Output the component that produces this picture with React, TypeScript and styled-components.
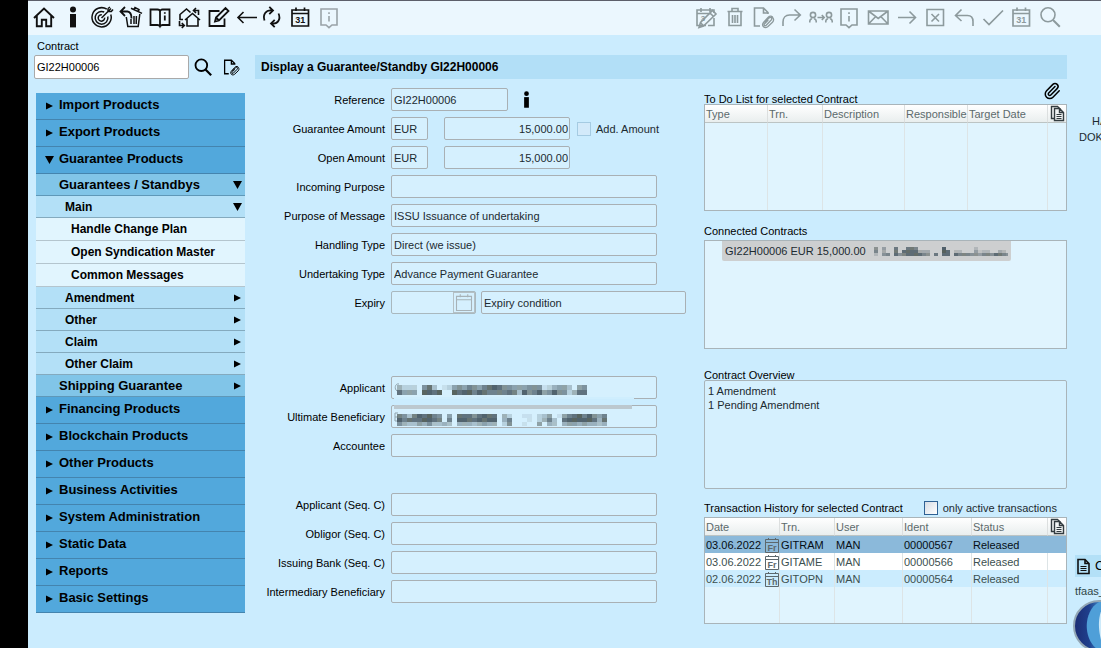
import React from "react";
import styled, { createGlobalStyle, css } from "styled-components";
import { Paperclip } from "lucide-react";

const GlobalStyle = createGlobalStyle`
  * { box-sizing: border-box; }
  body {
    margin: 0;
    background: #cbecfe;
    font-family: "Liberation Sans", Arial, sans-serif;
    font-size: 11px;
    line-height: 14px;
    color: #000;
  }
  button, input, textarea { font: inherit; color: inherit; margin: 0; }
  button { border: 0; padding: 0; background: none; cursor: pointer; }
`;

/* ---------- page frame ---------- */

const Page = styled.div`
  min-height: 100vh;
  display: flex;
  flex-direction: column;
  border-left: 28px solid #000;
  overflow: hidden;
`;

const Toolbar = styled.header`
  display: flex;
  justify-content: space-between;
  align-items: center;
  height: 35px;
  padding: 0 39px 2px 4px;
  border-top: 1px solid #5c5f6a;
  background: #ebf7fe;
`;

const IconGroup = styled.div<{ $muted?: boolean }>`
  display: flex;
  justify-content: space-between;
  gap: ${(p) => (p.$muted ? "0" : "5px")};
  width: ${(p) => (p.$muted ? "368px" : "auto")};
  color: ${(p) => (p.$muted ? "#8d9a9d" : "#111")};
`;

const IconButton = styled.button<{ $width?: number; $faded?: boolean }>`
  display: flex;
  justify-content: center;
  align-items: center;
  width: ${(p) => p.$width ?? 24}px;
  height: 24px;
  color: ${(p) => (p.$faded ? "#9aa3a8" : "inherit")};
`;

const Body = styled.div`
  flex: 1;
  display: grid;
  grid-template-columns: 211px minmax(0, 1fr) 28px;
  padding-left: 6px;
`;

/* ---------- sidebar ---------- */

const Sidebar = styled.aside`
  padding-top: 3px;
`;

const SearchLabel = styled.label`
  display: block;
  padding: 0 0 1px 3px;
  line-height: 16px;
`;

const SearchRow = styled.div`
  display: flex;
  align-items: center;
  height: 24px;
`;

const ContractInput = styled.input`
  width: 155px;
  height: 24px;
  padding: 0 2px;
  border: 1px solid #a9a9a9;
  border-radius: 2px;
  background: #fff;
`;

const SideIcon = styled(IconButton)`
  flex: 1;
`;

const Menu = styled.nav`
  margin: 14px 0 0 2px;
`;

const level0 = css`
  height: 27px;
  padding-left: 9px;
  font-size: 13px;
  background: #52a8dc;
  border-bottom: 1px solid #4484ae;
  & > span {
    padding-bottom: 2px;
  }
`;
const level1 = css`
  height: 22px;
  padding-left: 23px;
  font-size: 13px;
  background: #81c5e8;
  border-bottom: 1px solid #5f98b8;
`;
const level2 = css`
  height: 22px;
  padding-left: 29px;
  font-size: 12px;
  background: #b3e0f7;
  border-bottom: 1px solid #84aabe;
`;
const level3 = css`
  height: 23px;
  padding-left: 35px;
  font-size: 12px;
  background: #e1f5fe;
  border-bottom: 1px solid #b4c5ce;
`;
const levels = [level0, level1, level2, level3];

const MenuItem = styled.button<{ $level: number }>`
  display: flex;
  align-items: center;
  width: 100%;
  padding-right: 2px;
  font-weight: bold;
  text-align: left;
  ${(p) => levels[p.$level]}
`;

const MenuText = styled.span`
  flex: 1;
`;

const Caret = styled.svg<{ $lead?: boolean }>`
  width: 10px;
  height: 10px;
  margin-right: ${(p) => (p.$lead ? "4px" : "0")};
`;

/* ---------- main ---------- */

const Main = styled.main`
  padding: 20px 6px 0 10px;
`;

const Title = styled.h1`
  margin: 0;
  padding-left: 6px;
  font-size: 12px;
  line-height: 24px;
  background: #b2dff7;
`;

const Columns = styled.div`
  display: grid;
  grid-template-columns: 431px minmax(0, 1fr);
  column-gap: 18px;
`;

const Form = styled.form`
  padding-top: 9px;
`;

const FormGroup = styled.div`
  display: flex;
  flex-direction: column;
  gap: 6px;
  margin-bottom: 62px;
  & + & {
    margin-bottom: 36px;
  }
`;

const FormRow = styled.div`
  display: grid;
  grid-template-columns: 130px minmax(0, 1fr);
  column-gap: 6px;
  align-items: center;
  height: 23px;
`;

const RowLabel = styled.label`
  text-align: right;
  white-space: nowrap;
`;

const Controls = styled.div`
  display: flex;
  align-items: center;
`;

const Field = styled.input<{ $width?: number; $right?: boolean; $gap?: number }>`
  width: ${(p) => p.$width ?? 266}px;
  height: 23px;
  margin-left: ${(p) => p.$gap ?? 0}px;
  padding: 0 ${(p) => (p.$right ? 1 : 2)}px 0 2px;
  text-align: ${(p) => (p.$right ? "right" : "left")};
  color: #1c2a30;
  border: 1px solid #a9b0b4;
  border-radius: 2px;
  background: #d5f0fe;
`;

const InfoButton = styled(IconButton)`
  width: 16px;
  height: 22px;
  margin-left: 10px;
`;

const DateBox = styled.div`
  display: flex;
  align-items: center;
  width: 85px;
  border: 1px solid #a9b8be;
  border-radius: 2px;
  background: #d5f0fe;
`;

const DateInput = styled.input`
  width: 61px;
  height: 21px;
  border: 0;
  background: none;
`;

const DateButton = styled.button`
  display: flex;
  width: 22px;
  height: 21px;
  justify-content: center;
  align-items: center;
  border: 1px solid #b4c0c5;
  color: #a7b2b7;
`;

const CheckLabel = styled.label<{ $gap: number }>`
  display: flex;
  align-items: center;
  gap: 5px;
  margin-left: ${(p) => p.$gap}px;
  color: #1c2a30;
`;

const CheckBox = styled.input<{ $pale?: boolean }>`
  appearance: none;
  width: 14px;
  height: 14px;
  border: 1px solid ${(p) => (p.$pale ? "#a5cbe2" : "#2f6194")};
  background: ${(p) =>
    p.$pale ? "#d3eafa" : "linear-gradient(135deg, #d6dce4, #ffffff)"};
`;

const Masked = styled.div`
  display: grid;
  & > * {
    grid-area: 1 / 1;
  }
  svg {
    pointer-events: none;
  }
`;

/* ---------- right hand panels ---------- */

const Panel = styled.section``;

const PanelHead = styled.div<{ $height: number; $lift?: boolean }>`
  display: flex;
  justify-content: space-between;
  align-items: flex-end;
  height: ${(p) => p.$height}px;
  padding: ${(p) => (p.$lift ? "0 10px 2px 0" : "0 6px 0 0")};
  line-height: ${(p) => (p.$lift ? 14 : 10)}px;
`;

const PanelTitle = styled.h2`
  margin: 0;
  font-size: 11px;
  font-weight: normal;
  line-height: inherit;
  white-space: nowrap;
`;

const ClipButton = styled(IconButton)`
  width: 18px;
  margin-bottom: 1px;
`;

const ListBox = styled.ul`
  height: 109px;
  margin: 0;
  padding: 0 0 0 17px;
  list-style: none;
  border: 1px solid #a9b4b9;
  background: #e0f4fe;
`;

const ListEntry = styled.li`
  display: flex;
  align-items: center;
  width: 289px;
  height: 20px;
  padding-left: 3px;
  border-radius: 0 0 2px 2px;
  color: #1c2a30;
  background: #cdcfd0;
`;

const Overview = styled.textarea`
  display: block;
  width: 100%;
  height: 109px;
  padding: 3px;
  resize: none;
  color: #1c2a30;
  border: 1px solid #a9b4b9;
  border-radius: 2px;
  background: #d5f0fe;
  outline: none;
`;

const TableFrame = styled.div`
  height: 107px;
  overflow: hidden;
  border: 1px solid #a9b4b9;
  background: #e0f4fe;
`;

const Table = styled.table`
  width: 100%;
  table-layout: fixed;
  border-collapse: separate;
  border-spacing: 0;
`;

const HeadCell = styled.th`
  height: 18px;
  padding: 0 0 0 1px;
  overflow: hidden;
  text-align: left;
  font-weight: normal;
  line-height: 14px;
  white-space: nowrap;
  color: #5c6a6c;
  border-right: 1px solid #dcdfdf;
  border-bottom: 1px solid #bcc4c4;
  background: linear-gradient(#ffffff, #e9eeee);
  &:last-child {
    border-right: 0;
    padding-left: 2px;
  }
`;

const rowTone = {
  selected: css`
    height: 17px;
    color: #050d14;
    background: #8bb9da;
    border-right-color: #8bb9da;
  `,
  white: css`
    height: 17px;
    color: #3c4f4f;
    background: #fff;
  `,
  blue: css`
    height: 17px;
    color: #3c4f4f;
    background: #cbecfe;
  `,
  empty: css`
    height: 18px;
    background: #e0f4fe;
  `,
};

const Cell = styled.td<{ $tone: keyof typeof rowTone }>`
  padding: 0 0 0 1px;
  white-space: nowrap;
  line-height: 14px;
  border-right: 1px solid #dde4e6;
  ${(p) => rowTone[p.$tone]}
  &:last-child {
    border-right: 0;
  }
`;

const DateCell = styled.span`
  display: flex;
  align-items: center;
  justify-content: space-between;
`;

const CopyButton = styled.button`
  display: flex;
  width: 16px;
  height: 17px;
  color: #333c40;
`;

/* ---------- far right strip ---------- */

const Dock = styled.aside`
  display: flex;
  flex-direction: column;
  padding-top: 78px;
  overflow: hidden;
  white-space: nowrap;
`;

const Owner = styled.div`
  padding-left: 6px;
  line-height: 16px;
  color: #1c2a30;
`;

const OwnerName = styled.div`
  padding-left: 13px;
`;

const DockButton = styled.button`
  display: flex;
  align-items: center;
  gap: 4px;
  height: 22px;
  margin: auto 0 0 2px;
  padding-left: 1px;
  font-size: 13px;
  background: #b3e0f7;
`;

const Session = styled.div`
  padding: 6px 0 0 2px;
  line-height: 16px;
  color: #2f4646;
`;

const Logo = styled.svg`
  width: 52px;
  height: 49px;
`;

/* ---------- icons ---------- */

function Svg({ children, size = 24, w = 2 }: { children: React.ReactNode; size?: number; w?: number }) {
  return (
    <svg width={size} height={size} viewBox="0 0 24 24" fill="none" stroke="currentColor" strokeWidth={w} aria-hidden="true" style={{ flex: "none" }}>
      {children}
    </svg>
  );
}

const Home = () => (
  <Svg w={1.9}><path d="M2 13 12 3.5 22 13M4.8 11v10.2h5v-6.4h4.4v6.4h5V11" /></Svg>
);
const InfoMark = ({ size = 24 }: { size?: number }) => (
  <Svg size={size}>
    <circle cx="12" cy="4.6" r="3" fill="currentColor" stroke="none" />
    <path d="M9 9h6v13.4H9z" fill="currentColor" stroke="none" />
  </Svg>
);
const Target = () => (
  <Svg w={1.5}>
    <path d="M16.8 4.2A9.6 9.6 0 1 0 20.8 9.500M14.2 7A6.400 6.400 0 1 0 17.800 11.500M11.800 9.800A3.200 3.200 0 1 0 14.600 12.600" />
    <path d="m11.500 13 9.500-9.500M18 3.500v3h3.300l1.700-2M18 3.500 20 2" />
  </Svg>
);
const Restore = () => (
  <Svg w={1.8}>
    <path d="M1.5 6.5h7c3 .3 4 3 4 7M6 2 1.5 6.5 6 11" />
    <path d="m12 3.2 11 5.2M15 4.6l1-2 4 2-.8 2M7.3 12l1.5 9.6h10.4L20.8 9M12 14v5M15 11v8M17.4 11l-.2 8" strokeWidth="1.5" />
  </Svg>
);
const Book = () => (
  <Svg w={1.8}>
    <path d="M2.500 4.500h7c1.500 0 2.500 1 2.500 2 0-1 1-2 2.500-2h7V20h-7c-1.300 0-2 .4-2.500 1.400-.5-1-1.200-1.400-2.500-1.400h-7zM12 6.500v14.500" />
    <path d="M16.800 10.500v5M16.800 7.300v1.500" />
  </Svg>
);
const HouseSwap = () => (
  <Svg w={1.600}>
    <path d="M3 13V9.500L9.500 4l4 3.500M3 11.500v3h3M8 15l7.500-6.500L23 15M10 13.500V21h11v-7.500M17 5.500h4.500V10M19 3l-2.500 2.500L19 8M2.500 16v4.500H7M4.800 18l2.500 2.500L4.800 23" />
  </Svg>
);
const Edit = () => (
  <Svg w={1.8}>
    <path d="M13.500 6H3.500v15h15v-7.500M9 16.500l1-4L19.500 3l3 3L13 15.500zM10 12.500l3 3" />
  </Svg>
);
const Back = () => (
  <Svg w={1.600}><path d="M22 12.500H3M8.500 7 3 12.500l5.500 5.500" /></Svg>
);
const Refresh = () => (
  <Svg w={1.800}>
    <path d="M2.500 15.500C.5 9.500 4 5 9.500 5.500h1M7.300 1.800 11 5.500 7.300 9.200M16.500 8.500c2.500 5.500-.5 10.500-6 10h-1M12.700 14.800 9 18.500l3.700 3.700" />
  </Svg>
);
const Calendar = ({ day = "31" }: { day?: string }) => (
  <Svg w={1.700}>
    <path d="M4 5h16.500v16H4zM4 8.500h16.500M8 2.500V6M16.500 2.500V6" />
    <text x="12.200" y="18" fontSize="9" fontWeight="bold" textAnchor="middle" fill="currentColor" stroke="none">{day}</text>
  </Svg>
);
const InfoBubble = () => (
  <Svg w={1.600}>
    <path d="M4 4h16v16h-5l-3 2.600L9 20H4zM12 11v5.500M12 7.200v1.800" />
  </Svg>
);
const CalendarEdit = () => (
  <Svg w={1.600}>
    <path d="M12 20.500H3V5h17v3M3 8.500h14M7 3v4M16 3v4M20 13v7.500h-6" />
    <path d="m5 22.500 1.500-5L18.500 5.500l3.500 3.500L9.500 21zM6.500 17.500l3 3.500M16 8l3.500 3.500" />
    <text x="9" y="16" fontSize="8" fontWeight="bold" textAnchor="middle" fill="currentColor" stroke="none">3</text>
  </Svg>
);
const Bin = () => (
  <Svg w={1.600}>
    <path d="M4.500 6.500h15M9 6V3.500h6V6M6 7v13.500h12V7M9.500 10v8M12 10v8M14.500 10v8" />
  </Svg>
);
const FileClip = ({ size = 24, w = 1.600 }: { size?: number; w?: number }) => (
  <Svg size={size} w={w}>
    <path d="M17 9V7.500L12.500 3H3.500v18H9M12.500 3v5H17" />
    <path d="m13.500 17.500 4.500-4.500c1.800-1.600 3.600.3 2.200 2l-5 5.200c-1.400 1.300-2.800 0-1.600-1.500l3.700-3.700M22 13c1 1.500.8 2.800-.5 4.200L17 21.500c-3.500 3-7-.8-4.500-4l4.500-5c2-2 4.500-1.500 5 .5" strokeWidth="1.300" />
  </Svg>
);
const Forward = () => (
  <Svg w={1.600}><path d="M3 21v-4c0-4 2.500-7 6.500-7H20M14.500 4.500 20.300 10l-5.800 5.500" /></Svg>
);
const Handover = () => (
  <Svg w={1.600}>
    <circle cx="4" cy="10" r="2.600" /><circle cx="20" cy="10" r="2.600" />
    <path d="M.8 17.500v-1.500c0-1 .7-1.700 2-2.500M7.200 17.500v-1.500c0-1-.7-1.700-2-2.500M16.800 17.500v-1.500c0-1 .7-1.700 2-2.500M23.200 17.500v-1.500c0-1-.7-1.700-2-2.500M8.500 12.500h6.500M12.800 10l2.400 2.500-2.400 2.500" />
  </Svg>
);
const Mail = () => (
  <Svg w={1.600}><path d="M2.500 6h19.500v13H2.500zM2.500 6l9.700 7.500L22 6M2.500 19l7-7.300M22 19l-7-7.300" /></Svg>
);
const Next = () => (
  <Svg w={1.600}><path d="M3 12.500h17M14.500 6.500l6 6-6 6" /></Svg>
);
const Cancel = () => (
  <Svg w={1.600}><path d="M4 4.500h16.500v16H4zM8.500 9l7.500 7.500M16 9l-7.500 7.500" /></Svg>
);
const Undo = () => (
  <Svg w={1.600}><path d="M21 21v-4.500c0-4-2-6-5.500-6H3.500M9.500 4.500 3.500 10.500l6 5.500" /></Svg>
);
const Tick = () => (
  <Svg w={1.700}><path d="m2.500 14 5.500 5.500L22 5.500" /></Svg>
);
const Magnifier = ({ size = 24, w = 1.600 }: { size?: number; w?: number }) => (
  <Svg size={size} w={w}><circle cx="10" cy="9.800" r="7" /><path d="m15 15 6.800 6.800" strokeWidth={w + 0.400} /></Svg>
);
const CopyPages = () => (
  <svg width="16" height="17" viewBox="0 0 16 17" fill="none" stroke="currentColor" aria-hidden="true">
    <path d="M4.500 13.500h-3v-12h6l3 3" strokeWidth="1.400" />
    <path d="M4.500 3.500h5l4 4v8h-9zM9.500 3.500v4h4" strokeWidth="1.400" fill="#f2f5f5" />
    <path d="M6.500 9.500h5M6.500 11.500h5M6.500 13.500h5" />
  </svg>
);
const DocIcon = () => (
  <svg width="15" height="17" viewBox="0 0 15 17" fill="none" stroke="#111" aria-hidden="true" style={{ flex: "none" }}>
    <path d="M2 1.500h7l4 4v10H2zM9 1.500v4h4" strokeWidth="1.600" />
    <path d="M4.500 8.500h6M4.500 10.500h6M4.500 12.500h6" strokeWidth="1" />
  </svg>
);
const BlankCalendar = () => (
  <Svg size={20} w={1.300}><path d="M3 4h18v17H3zM3 8h18M7.500 1.500V5M16.500 1.500V5" /></Svg>
);
const DayIcon = ({ day }: { day: string }) => (
  <svg width="15" height="16" viewBox="0 0 15 16" fill="none" stroke="#5d686d" aria-hidden="true" style={{ flex: "none" }}>
    <path d="M1.500 2.500h13v13h-13zM1.500 5.500h13M4.500 1v2M11.500 1v2" />
    <text x="8" y="14" fontSize="9" fontWeight="bold" textAnchor="middle" fill="#5d686d" stroke="none">{day}</text>
  </svg>
);

/* Pixelated strip hiding confidential names: one digit per cell, 0 clear to 9 dark. */
function mosaic(rows: string[], x: number, y: number, cw: number, ch: number) {
  return rows.flatMap((row, r) =>
    [...row].map((d, c) =>
      d === "0" ? null : (
        <rect key={`${r}-${c}`} x={x + c * cw} y={y + r * ch} width={cw} height={ch} fill={(c * 7 + r) % 3 ? "#42535e" : "#4a544f"} opacity={Number(d) / 10} />
      )
    )
  );
}

/* ---------- data ---------- */

type Entry = { text: string; level: number; open?: boolean };

const menu: Entry[] = [
  { text: "Import Products", level: 0 },
  { text: "Export Products", level: 0 },
  { text: "Guarantee Products", level: 0, open: true },
  { text: "Guarantees / Standbys", level: 1, open: true },
  { text: "Main", level: 2, open: true },
  { text: "Handle Change Plan", level: 3 },
  { text: "Open Syndication Master", level: 3 },
  { text: "Common Messages", level: 3 },
  { text: "Amendment", level: 2 },
  { text: "Other", level: 2 },
  { text: "Claim", level: 2 },
  { text: "Other Claim", level: 2 },
  { text: "Shipping Guarantee", level: 1 },
  { text: "Financing Products", level: 0 },
  { text: "Blockchain Products", level: 0 },
  { text: "Other Products", level: 0 },
  { text: "Business Activities", level: 0 },
  { text: "System Administration", level: 0 },
  { text: "Static Data", level: 0 },
  { text: "Reports", level: 0 },
  { text: "Basic Settings", level: 0 },
];

const leftTools: { name: string; icon: React.ReactNode; width?: number; faded?: boolean }[] = [
  { name: "Home", icon: <Home /> },
  { name: "Information", icon: <InfoMark /> },
  { name: "Target", icon: <Target /> },
  { name: "Restore", icon: <Restore /> },
  { name: "Manual", icon: <Book /> },
  { name: "Switch entity", icon: <HouseSwap /> },
  { name: "Edit", icon: <Edit /> },
  { name: "Back", icon: <Back /> },
  { name: "Refresh", icon: <Refresh />, width: 19 },
  { name: "Calendar", icon: <Calendar /> },
  { name: "Hint", icon: <InfoBubble />, faded: true },
];

const rightTools: { name: string; icon: React.ReactNode }[] = [
  { name: "Edit diary", icon: <CalendarEdit /> },
  { name: "Delete", icon: <Bin /> },
  { name: "Attachments", icon: <FileClip /> },
  { name: "Forward", icon: <Forward /> },
  { name: "Hand over", icon: <Handover /> },
  { name: "Notes", icon: <InfoBubble /> },
  { name: "Message", icon: <Mail /> },
  { name: "Next", icon: <Next /> },
  { name: "Cancel", icon: <Cancel /> },
  { name: "Undo", icon: <Undo /> },
  { name: "Confirm", icon: <Tick /> },
  { name: "Diary", icon: <Calendar /> },
  { name: "Find", icon: <Magnifier /> },
];

const history = [
  { date: "03.06.2022", day: "Fr", trn: "GITRAM", user: "MAN", ident: "00000567", status: "Released", tone: "selected" as const },
  { date: "03.06.2022", day: "Fr", trn: "GITAME", user: "MAN", ident: "00000566", status: "Released", tone: "white" as const },
  { date: "02.06.2022", day: "Th", trn: "GITOPN", user: "MAN", ident: "00000564", status: "Released", tone: "blue" as const },
];

/* ---------- parts ---------- */

function Triangle({ open, lead }: { open?: boolean; lead?: boolean }) {
  return (
    <Caret $lead={lead} viewBox="0 0 10 10" aria-hidden="true">
      {open ? <path d="M0 1h9L4.500 9z" /> : <path d="M1 1.500v7l7-3.500z" />}
    </Caret>
  );
}

function TextRow({ id, label, value = "" }: { id: string; label: string; value?: string }) {
  return (
    <FormRow>
      <RowLabel htmlFor={id}>{label}</RowLabel>
      <Controls><Field id={id} defaultValue={value} readOnly /></Controls>
    </FormRow>
  );
}

function AmountRow({ id, label, children }: { id: string; label: string; children?: React.ReactNode }) {
  return (
    <FormRow>
      <RowLabel htmlFor={id}>{label}</RowLabel>
      <Controls>
        <Field $width={37} defaultValue="EUR" aria-label={`${label} currency`} readOnly />
        <Field id={id} $width={126} $gap={16} $right defaultValue="15,000.00" readOnly />
        {children}
      </Controls>
    </FormRow>
  );
}

function MaskedRow({ id, label, children }: { id: string; label: string; children: React.ReactNode }) {
  return (
    <FormRow>
      <RowLabel htmlFor={id}>{label}</RowLabel>
      <Masked>
        <Field id={id} readOnly />
        <svg width="266" height="23" viewBox="0 0 266 23" aria-hidden="true">{children}</svg>
      </Masked>
    </FormRow>
  );
}

function HeadRow({ names }: { names: string[] }) {
  return (
    <thead>
      <tr>
        {names.map((n) => <HeadCell key={n} scope="col">{n}</HeadCell>)}
        <HeadCell scope="col"><CopyButton type="button" aria-label="Copy table"><CopyPages /></CopyButton></HeadCell>
      </tr>
    </thead>
  );
}

function Widths({ list }: { list: (number | null)[] }) {
  return <colgroup>{list.map((w, i) => <col key={i} width={w ?? undefined} />)}</colgroup>;
}

export default function App() {
  return (
    <Page>
      <GlobalStyle />
      <Toolbar>
        <IconGroup>
          {leftTools.map((t) => (
            <IconButton key={t.name} type="button" aria-label={t.name} $width={t.width} $faded={t.faded}>{t.icon}</IconButton>
          ))}
        </IconGroup>
        <IconGroup $muted>
          {rightTools.map((t) => (
            <IconButton key={t.name} type="button" aria-label={t.name}>{t.icon}</IconButton>
          ))}
        </IconGroup>
      </Toolbar>
      <Body>
        <Sidebar>
          <SearchLabel htmlFor="contract">Contract</SearchLabel>
          <SearchRow>
            <ContractInput id="contract" defaultValue="GI22H00006" />
            <SideIcon type="button" aria-label="Search contract"><Magnifier size={20} w={2.200} /></SideIcon>
            <SideIcon type="button" aria-label="Contract documents"><FileClip size={18} w={1.700} /></SideIcon>
          </SearchRow>
          <Menu>
            {menu.map((m) => (
              <MenuItem key={m.text} type="button" $level={m.level}>
                {m.level === 0 && <Triangle open={m.open} lead />}
                <MenuText>{m.text}</MenuText>
                {(m.level === 1 || m.level === 2) && <Triangle open={m.open} />}
              </MenuItem>
            ))}
          </Menu>
        </Sidebar>

        <Main>
          <Title>Display a Guarantee/Standby GI22H00006</Title>
          <Columns>
            <Form>
              <FormGroup>
                <FormRow>
                  <RowLabel htmlFor="reference">Reference</RowLabel>
                  <Controls>
                    <Field id="reference" $width={117} defaultValue="GI22H00006" readOnly />
                    <InfoButton type="button" aria-label="Reference details"><InfoMark size={19} /></InfoButton>
                  </Controls>
                </FormRow>
                <AmountRow id="amount" label="Guarantee Amount">
                  <CheckLabel $gap={7}><CheckBox type="checkbox" $pale />Add. Amount</CheckLabel>
                </AmountRow>
                <AmountRow id="open-amount" label="Open Amount" />
                <TextRow id="incoming" label="Incoming Purpose" />
                <TextRow id="purpose" label="Purpose of Message" value="ISSU Issuance of undertaking" />
                <TextRow id="handling" label="Handling Type" value="Direct (we issue)" />
                <TextRow id="undertaking" label="Undertaking Type" value="Advance Payment Guarantee" />
                <FormRow>
                  <RowLabel htmlFor="expiry">Expiry</RowLabel>
                  <Controls>
                    <DateBox>
                      <DateInput id="expiry" readOnly />
                      <DateButton type="button" aria-label="Pick expiry date"><BlankCalendar /></DateButton>
                    </DateBox>
                    <Field $width={205} $gap={5} defaultValue="Expiry condition" aria-label="Expiry condition" readOnly />
                  </Controls>
                </FormRow>
              </FormGroup>
              <FormGroup>
                <MaskedRow id="applicant" label="Applicant">
                  <path d="M8 8c-4-1-5 5-2 7" fill="none" stroke="#8fa3ad" />
                  {mosaic(["42220683012565765789866555666124553056", "85550998900989979877778739679569662488"], 6, 9, 5, 5)}
                  <path d="M3 21h240v2H3z" fill="#cfeefe" />
                </MaskedRow>
                <MaskedRow id="beneficiary" label="Ultimate Beneficiary">
                  <path d="M3 0h238v4H3z" fill="#bcc8cf" />
                  <path d="M7 8H4v8h3M4 12h3" fill="none" stroke="#8fa3ad" />
                  {mosaic(["763798976050888689880420011023501578979657", "978889987070998898990470001024730899999848", "643354633430444345440260010050430455454434"], 6, 9, 5, 4)}
                </MaskedRow>
                <TextRow id="accountee" label="Accountee" />
              </FormGroup>
              <FormGroup>
                <TextRow id="applicant-c" label="Applicant (Seq. C)" />
                <TextRow id="obligor-c" label="Obligor (Seq. C)" />
                <TextRow id="bank-c" label="Issuing Bank (Seq. C)" />
                <TextRow id="intermediary" label="Intermediary Beneficiary" />
              </FormGroup>
            </Form>

            <div>
              <Panel>
                <PanelHead $height={25}>
                  <PanelTitle>To Do List for selected Contract</PanelTitle>
                  <ClipButton type="button" aria-label="Attachments"><Paperclip size={18} strokeWidth={2} /></ClipButton>
                </PanelHead>
                <TableFrame>
                  <Table>
                    <Widths list={[63, 55, null, 63, 80, 18]} />
                    <HeadRow names={["Type", "Trn.", "Description", "Responsible", "Target Date"]} />
                    <tbody>
                      {[0, 1, 2, 3, 4].map((r) => (
                        <tr key={r}>{[0, 1, 2, 3, 4, 5].map((c) => <Cell key={c} $tone="empty" />)}</tr>
                      ))}
                    </tbody>
                  </Table>
                </TableFrame>
              </Panel>

              <Panel>
                <PanelHead $height={29} $lift><PanelTitle>Connected Contracts</PanelTitle></PanelHead>
                <ListBox>
                  <ListEntry>
                    GI22H00006 EUR 15,000.00
                    <svg width="142" height="14" viewBox="0 0 142 14" aria-hidden="true">
                      {mosaic(["5040070077600000090000000200000000", "6030070888833300098022000412200320", "2056085688886507088086665546658765"], 8, 3, 4, 3)}
                    </svg>
                  </ListEntry>
                </ListBox>
              </Panel>

              <Panel>
                <PanelHead $height={31}><PanelTitle as="label" htmlFor="overview">Contract Overview</PanelTitle></PanelHead>
                <Overview id="overview" readOnly defaultValue={"1 Amendment\n1 Pending Amendment"} />
              </Panel>

              <Panel>
                <PanelHead $height={28} $lift>
                  <PanelTitle>Transaction History for selected Contract</PanelTitle>
                  <CheckLabel $gap={0}><CheckBox type="checkbox" />only active transactions</CheckLabel>
                </PanelHead>
                <TableFrame>
                  <Table>
                    <Widths list={[75, 55, 68, null, 76, 18]} />
                    <HeadRow names={["Date", "Trn.", "User", "Ident", "Status"]} />
                    <tbody>
                      {history.map((h) => (
                        <tr key={h.ident}>
                          <Cell $tone={h.tone}><DateCell>{h.date}<DayIcon day={h.day} /></DateCell></Cell>
                          <Cell $tone={h.tone}>{h.trn}</Cell>
                          <Cell $tone={h.tone}>{h.user}</Cell>
                          <Cell $tone={h.tone}>{h.ident}</Cell>
                          <Cell $tone={h.tone}>{h.status}</Cell>
                          <Cell $tone={h.tone} />
                        </tr>
                      ))}
                      {[0, 1].map((r) => (
                        <tr key={r}>{[0, 1, 2, 3, 4, 5].map((c) => <Cell key={c} $tone="empty" />)}</tr>
                      ))}
                    </tbody>
                  </Table>
                </TableFrame>
              </Panel>
            </div>
          </Columns>
        </Main>

        <Dock>
          <Owner>
            <OwnerName>HA</OwnerName>
            DOK
          </Owner>
          <DockButton type="button"><DocIcon />C</DockButton>
          <Session>tfaas_</Session>
          <Logo viewBox="0 0 52 49" aria-hidden="true">
            <defs>
              <linearGradient id="sphere" x1="0" x2="1">
                <stop offset="0" stopColor="#1c2d74" />
                <stop offset="0.300" stopColor="#1f3f8c" />
                <stop offset="0.600" stopColor="#4a9bd6" />
              </linearGradient>
            </defs>
            <circle cx="26" cy="27" r="25" fill="url(#sphere)" stroke="#93a7b5" strokeWidth="2" />
            <path d="M26 3C10 12 10 40 24 50h20V3z" fill="#4f9fd8" />
            <path d="M33 4C25 12 23 30 31 50h16V4z" fill="#cdeafa" />
          </Logo>
        </Dock>
      </Body>
    </Page>
  );
}
